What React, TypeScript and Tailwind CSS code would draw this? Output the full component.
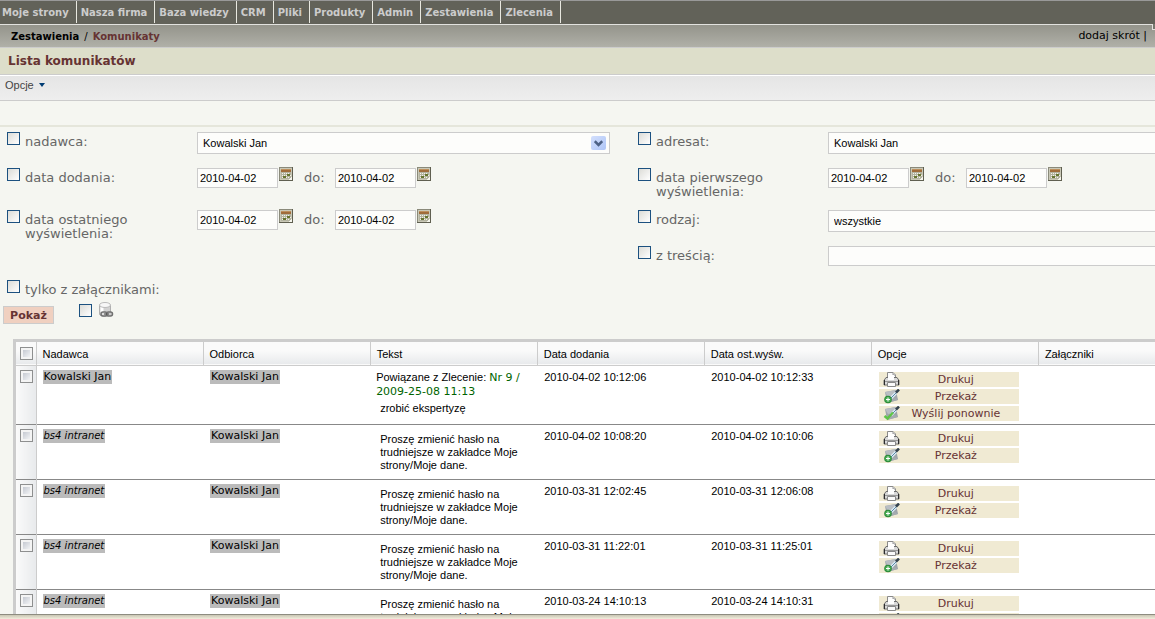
import { useId } from 'react'
import type { ReactNode } from 'react'

const menu = ['Moje strony', 'Nasza firma', 'Baza wiedzy', 'CRM', 'Pliki', 'Produkty', 'Admin', 'Zestawienia', 'Zlecenia']

const messages = [
  { sender: 'Kowalski Jan', system: false, added: '2010-04-02 10:12:06', seen: '2010-04-02 10:12:33' },
  { sender: 'bs4 intranet', system: true, added: '2010-04-02 10:08:20', seen: '2010-04-02 10:10:06' },
  { sender: 'bs4 intranet', system: true, added: '2010-03-31 12:02:45', seen: '2010-03-31 12:06:08' },
  { sender: 'bs4 intranet', system: true, added: '2010-03-31 11:22:01', seen: '2010-03-31 11:25:01' },
  { sender: 'bs4 intranet', system: true, added: '2010-03-24 14:10:13', seen: '2010-03-24 14:10:31' },
]

const columns = ['Nadawca', 'Odbiorca', 'Tekst', 'Data dodania', 'Data ost.wyśw.', 'Opcje', 'Załączniki']

const CalendarIcon = () => (
  <svg width="14" height="14" viewBox="0 0 14 14" shapeRendering="crispEdges">
    <rect width="14" height="14" fill="#5f5f50" />
    <path d="M0 0H13V1H1V13H0Z" fill="#8a8a7a" />
    <rect x="1" y="1" width="12" height="12" fill="#c9c8b6" />
    <rect x="2" y="2" width="10" height="3" fill="#a06c3a" />
    <rect x="2" y="2" width="10" height="1" fill="#bd8f5c" />
    <rect x="2" y="5" width="10" height="7" fill="#b3b3a0" />
    <path d="M3 6h1v1H3zM5 6h1v1H5zM7 6h1v1H7zM9 6h1v1H9zM3 8h1v1H3zM5 8h1v1H5zM7 8h1v1H7zM3 10h1v1H3zM7 10h1v1H7zM9 10h1v1H9zM11 8h1v1h-1z" fill="#f4f4e8" />
    <path d="M8 7h3v2H8zM4 9h3v2H4z" fill="#66752f" />
    <path d="M10 12h1v-1h1v-1h1v3h-3z" fill="#f6f6ee" />
  </svg>
)

const PrinterIcon = () => (
  <svg width="17" height="15" viewBox="0 0 17 15">
    <path d="M4.500 7V.5H10L12.500 3V7" fill="#fbfbfb" stroke="#8a8a8a" />
    <path d="M10 .5V3h2.500" fill="#ddd" stroke="#999" />
    <path d="M3 5.500h11l2 3v4.500H1V8.500Z" fill="#d9d9d9" stroke="#6e6e6e" />
    <path d="M5 3h6v5H5Z" fill="#fff" />
    <path d="M2 9.500h13" stroke="#999" />
    <path d="M4.500 10.500h8v4h-8Z" fill="#fafafa" stroke="#888" />
    <path d="M1.500 8v5M15.500 8v5" stroke="#2d2d2d" />
  </svg>
)

const MailPen = () => (
  <>
    <path d="M2 3 13 1 15 11 4 14Z" fill="#9fa5aa" />
    <path d="M2 3 13 1 10 7 5 8Z" fill="#b9bec3" />
    <path d="M4 14 9 7 15 11Z" fill="#a5abb0" />
    <path d="m8 9 5-5" stroke="#dcecf6" strokeWidth="3" />
    <path d="m8 9 6-6" stroke="#5b87a3" />
    <path d="m13 3.500 3-3" stroke="#34424e" strokeWidth="2.500" />
  </>
)

const ForwardIcon = () => (
  <svg width="17" height="15" viewBox="0 0 17 15">
    <MailPen />
    <circle cx="5" cy="10.500" r="3.800" fill="#2c8a38" />
    <circle cx="5" cy="10.500" r="2.800" fill="#49ad54" />
    <path d="M3 10.500h4M5 8.500v4" stroke="#fff" />
  </svg>
)

const ResendIcon = () => (
  <svg width="17" height="15" viewBox="0 0 17 15">
    <MailPen />
    <path d="m1.500 10 3 2.500 5.500-6" fill="none" stroke="#5fc447" strokeWidth="2.500" />
  </svg>
)

const StorageLinkIcon = () => (
  <svg width="16" height="16" viewBox="0 0 16 16">
    <path d="M1.500 3v9c0 3 11 3 11 0V3" fill="#d2d2d2" stroke="#b0b0b0" />
    <path d="M4 4v8" stroke="#fff" strokeWidth="3" />
    <ellipse cx="7" cy="3" rx="5.500" ry="2.500" fill="#f7f7f7" stroke="#bbb" />
    <rect x="3" y="10" width="6" height="4" rx="2" fill="#ddd" stroke="#707070" strokeWidth="1.500" />
    <rect x="8.500" y="10" width="6" height="4" rx="2" fill="#ccc" stroke="#707070" strokeWidth="1.500" />
    <path d="M6 12h5" stroke="#444" />
  </svg>
)

const FilterCheckbox = ({ id, label }: { id?: string; label?: string }) => (
  <input
    id={id}
    type="checkbox"
    aria-label={label}
    className="size-[13px] shrink-0 appearance-none border border-[#1c5180] bg-linear-to-br from-[#dcdcd7] to-white checked:bg-[#1c5180]"
  />
)

const GridCheckbox = ({ label }: { label: string }) => (
  <input
    type="checkbox"
    aria-label={label}
    className="block size-[13px] appearance-none border border-[#8e8f8f] bg-linear-to-br from-[#b9bec8] to-white outline-2 -outline-offset-3 outline-[#f4f4f4] checked:bg-[#8e8f8f]"
  />
)

const Filter = ({ label, children }: { label: string; children?: ReactNode }) => {
  const id = useId()
  return (
    <div className="flex items-start">
      <FilterCheckbox id={id} />
      <label htmlFor={id} className="mt-[3px] ml-[5px] w-[172px] shrink-0 pr-8 text-[13px] leading-[14px] text-[#666]">
        {label}
      </label>
      {children}
    </div>
  )
}

const Select = ({ label, value }: { label: string; value: string }) => (
  <div className="relative w-[413px]">
    <select
      aria-label={label}
      className="block h-[22px] w-full appearance-none border border-[#ccc] bg-[#fdfdfb] px-[5px] font-['Liberation_Sans',sans-serif] text-[11px] text-black"
    >
      <option>{value}</option>
    </select>
    <span className="pointer-events-none absolute top-1 right-1 flex h-[14px] w-[15px] items-center justify-center rounded-xs bg-linear-to-br from-[#d3dffc] to-[#aec5f7]">
      <svg width="9" height="7" viewBox="0 0 9 7">
        <path d="m.8 1.200 3.700 3.700 3.700-3.700" fill="none" stroke="#4d6185" strokeWidth="2.500" />
      </svg>
    </span>
  </div>
)

const DateField = ({ label }: { label: string }) => (
  <div className="flex items-start gap-px">
    <input
      type="text"
      aria-label={label}
      defaultValue="2010-04-02"
      className="h-5 w-[81px] border border-[#ccc] bg-[#fdfdfb] px-[2px] font-['Liberation_Sans',sans-serif] text-[11px] text-black"
    />
    <button type="button" aria-label="Kalendarz" className="-mt-px">
      <CalendarIcon />
    </button>
  </div>
)

const DateRange = ({ label }: { label: string }) => (
  <div className="flex items-start">
    <DateField label={`${label} od`} />
    <span className="mt-[3px] w-[42px] pl-[11px] text-[13px] leading-[14px] text-[#666]">do:</span>
    <DateField label={`${label} do`} />
  </div>
)

const Action = ({ icon, children }: { icon: ReactNode; children: ReactNode }) => (
  <button type="button" className="flex h-[15px] w-[140px] items-center bg-[#f0ead3] pl-1 text-[11px] text-[#633]">
    {icon}
    <span className="flex-1 pr-2 text-center">{children}</span>
  </button>
)

const Person = ({ system, children }: { system?: boolean; children: ReactNode }) => (
  <span
    className={`block h-[14px] w-fit bg-[#bbb] px-px font-['DejaVu_Sans',sans-serif] leading-[14px] whitespace-nowrap ${system ? 'text-[10px] italic' : 'text-[11px]'}`}
  >
    {children}
  </span>
)

export default function App() {
  return (
    <div className="flex h-screen flex-col overflow-hidden bg-[#f5f6f1] font-['DejaVu_Sans',sans-serif] text-black">
      <div className="min-h-0 flex-1 overflow-hidden">
        <nav className="flex h-[25px] border-t border-b border-t-[#999] border-b-[#e2e2de] bg-[#626259]">
          {menu.map((item) => (
            <a
              key={item}
              href="#"
              className="h-[22px] border-r border-[#e8e8e0] pr-[7px] pl-1 text-[10px] leading-[23px] font-bold whitespace-nowrap text-[#ccc] first:pl-[2px]"
            >
              {item}
            </a>
          ))}
        </nav>
        <div className="relative flex h-[23px] items-center justify-between border-b border-[#ccc] bg-linear-to-b from-[#94948b] to-[#b0b0a8] pr-2 pl-[11px]">
          <div className="flex gap-[5px] text-[10px]">
            <a href="#" className="font-bold">Zestawienia</a>
            <span>/</span>
            <span className="font-bold text-[#633]">Komunikaty</span>
          </div>
          <div className="text-[11px]">
            <a href="#">dodaj skrót</a> |
          </div>
          <span className="absolute -top-px right-0 h-[6px] w-[3px] border-b border-l border-[#e2e2de] bg-[#77776e]" />
        </div>
        <h1 className="h-[27px] border-b border-[#ccc] bg-[#dddeca] pl-2 text-[12px] leading-[26px] font-bold text-[#633]">
          Lista komunikatów
        </h1>
        <div className="h-[26px] border-t border-b border-t-white border-b-[#ccc] bg-linear-to-b from-[#e5e5e5] to-[#eee] pl-[5px]">
          <button type="button" className="flex items-center gap-[5px] font-['Liberation_Sans',sans-serif] text-[11px] leading-[18px] text-[#444]">
            Opcje
            <svg width="6" height="4" viewBox="0 0 6 4">
              <path d="M0 0h6L3 4Z" fill="#003c74" />
            </svg>
          </button>
        </div>
        <div className="h-[26px] border-b-2 border-[#e5e6db]" />

        <form className="pt-[5px]">
          <div className="grid grid-cols-[631px_minmax(631px,1fr)] grid-rows-[36px_42px_36px_34px] pl-[7px]">
            <Filter label="nadawca:">
              <Select label="Nadawca" value="Kowalski Jan" />
            </Filter>
            <Filter label="adresat:">
              <Select label="Adresat" value="Kowalski Jan" />
            </Filter>
            <Filter label="data dodania:">
              <DateRange label="Data dodania" />
            </Filter>
            <Filter label="data pierwszego wyświetlenia:">
              <DateRange label="Data pierwszego wyświetlenia" />
            </Filter>
            <Filter label="data ostatniego wyświetlenia:">
              <DateRange label="Data ostatniego wyświetlenia" />
            </Filter>
            <Filter label="rodzaj:">
              <Select label="Rodzaj" value="wszystkie" />
            </Filter>
            <div />
            <Filter label="z treścią:">
              <input type="text" aria-label="Treść" className="h-5 w-[413px] border border-[#ccc] bg-[#fdfdfb] px-1 text-[11px]" />
            </Filter>
          </div>
          <div className="flex items-start pl-[7px]">
            <FilterCheckbox id="attachments" />
            <label htmlFor="attachments" className="mt-[3px] ml-[5px] text-[13px] leading-[14px] text-[#666]">
              tylko z załącznikami:
            </label>
          </div>
          <div className="flex items-start pt-[5px] pl-[3px]">
            <button type="submit" className="mt-1 h-[18px] w-[51px] border border-[#ccc] bg-[#f0d0c0] text-[11px] leading-[18px] font-bold text-[#633]">
              Pokaż
            </button>
            <div className="flex items-center gap-[6px] pl-[25px]">
              <FilterCheckbox label="Z magazynu" />
              <StorageLinkIcon />
            </div>
          </div>
        </form>

        <div className="mt-[15px] ml-[13px] border-t-3 border-l-3 border-[#ccc] bg-white font-['Liberation_Sans',sans-serif] text-[11px] leading-[13px]">
          <table className="w-full min-w-[1190px] table-fixed border-collapse">
            <colgroup>
              <col className="w-5" />
              {columns.map((column) => (
                <col key={column} />
              ))}
            </colgroup>
            <thead>
              <tr className="h-[23px] border-b border-[#ccc] bg-linear-to-b from-[#fafafa] from-40% to-[#e8eaec]">
                <th className="border-r border-[#ccc] pl-1">
                  <GridCheckbox label="Zaznacz wszystkie" />
                </th>
                {columns.map((column) => (
                  <th key={column} className="border-r border-[#ccc] pt-[2px] pl-[6px] text-left font-normal">
                    {column}
                  </th>
                ))}
              </tr>
            </thead>
            <tbody>
              {messages.map((message) => (
                <tr key={message.added} className="h-[55px] border-b border-[#888] align-top">
                  <td className="border-r border-[#ccc] bg-linear-to-r from-[#fafafa] to-[#e8eaec] pt-1 pl-1">
                    <GridCheckbox label={message.added} />
                  </td>
                  <td className="pt-1 pl-[6px]">
                    <Person system={message.system}>{message.sender}</Person>
                  </td>
                  <td className="pt-1 pl-[7px]">
                    <Person>Kowalski Jan</Person>
                  </td>
                  <td className="pt-1 pl-[6px]">
                    {message.system ? (
                      <p className="w-[150px] pt-1 pl-1">Proszę zmienić hasło na trudniejsze w zakładce Moje strony/Moje dane.</p>
                    ) : (
                      <>
                        <p className="leading-[14px]">
                          Powiązane z Zlecenie:{' '}
                          <a href="#" className="font-['DejaVu_Sans',sans-serif] text-[11px] leading-none text-[#006400]">
                            Nr 9 / 2009-25-08 11:13
                          </a>
                        </p>
                        <p className="pt-1 pl-1">zrobić ekspertyzę</p>
                      </>
                    )}
                  </td>
                  <td className="pt-[5px] pl-[7px]">{message.added}</td>
                  <td className="pt-[5px] pl-[7px]">{message.seen}</td>
                  <td className="pt-[6px] pb-[3px] pl-[8px] font-['DejaVu_Sans',sans-serif]">
                    <div className="flex flex-col gap-[2px]">
                      <Action icon={<PrinterIcon />}>Drukuj</Action>
                      <Action icon={<ForwardIcon />}>Przekaż</Action>
                      {!message.system && <Action icon={<ResendIcon />}>Wyślij ponownie</Action>}
                    </div>
                  </td>
                  <td />
                </tr>
              ))}
            </tbody>
          </table>
        </div>
      </div>
      <footer className="h-[5px] shrink-0 border-t border-[#8e8c80] bg-linear-to-b from-[#c9c6b4] to-[#f3eddc]" />
    </div>
  )
}
